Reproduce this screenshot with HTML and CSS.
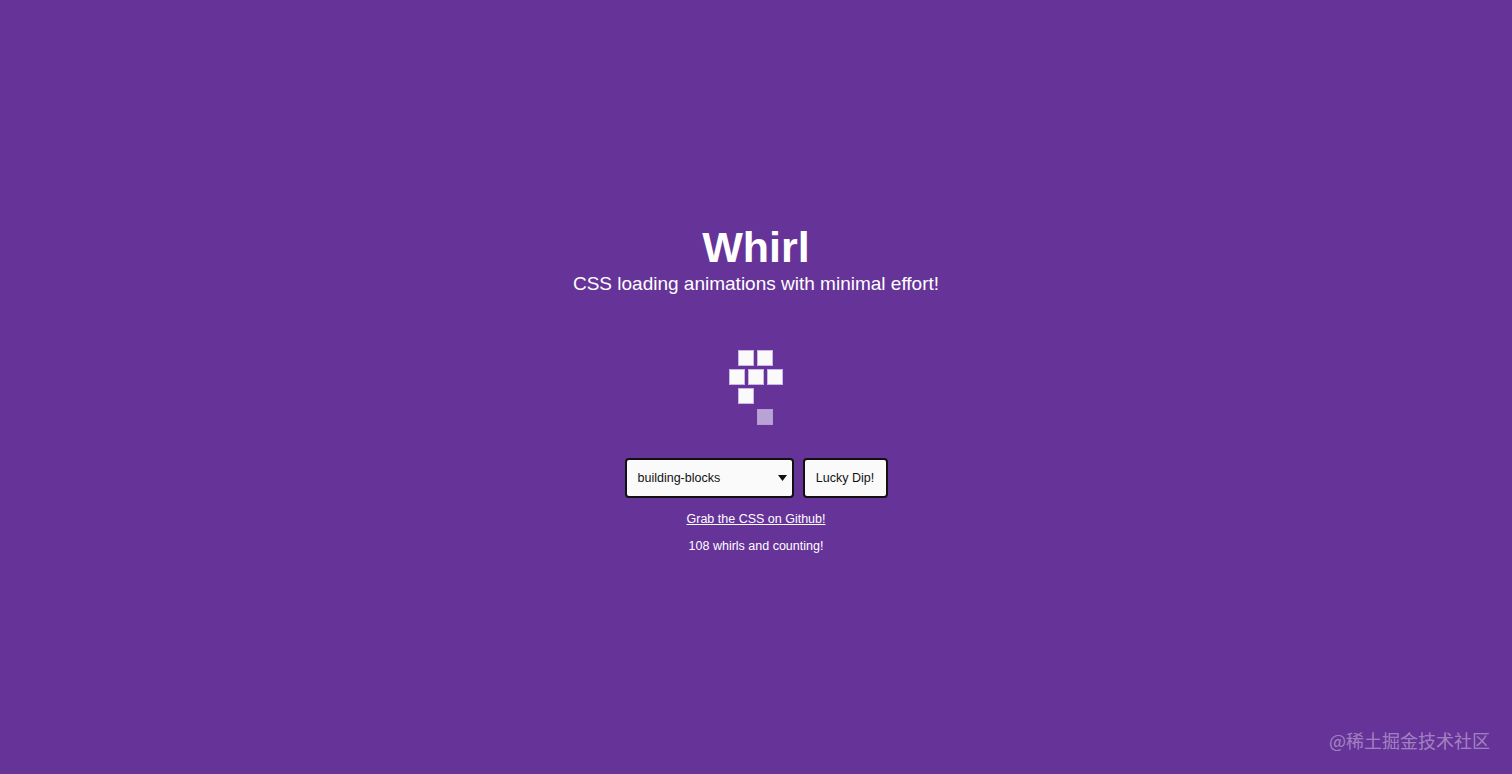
FILE: index.html
```html
<!DOCTYPE html>
<html lang="en">
<head>
    <meta charset="UTF-8">
    <meta name="viewport" content="width=device-width, initial-scale=1.0">
    <title>Whirl</title>
    <link rel="stylesheet" href="styles.css">
</head>
<body>

    <main class="page">
        <header class="intro">
            <h1 class="title">Whirl</h1>
            <p class="tagline">CSS loading animations with minimal effort!</p>
        </header>

        <!-- current whirl: building-blocks -->
        <div class="whirl">
            <span class="block b1"></span>
            <span class="block b2"></span>
            <span class="block b3"></span>
            <span class="block b4"></span>
            <span class="block b5"></span>
            <span class="block b6"></span>
            <span class="block b7 fading"></span>
        </div>

        <div class="controls">
            <div class="picker">
                <span class="picker-value">building-blocks</span>
                <svg class="picker-arrow" width="9" height="6" viewBox="0 0 9 6"><path d="M0 0H9L4.5 6Z" fill="#111"/></svg>
            </div>
            <button class="lucky" type="button">Lucky Dip!</button>
        </div>

        <a class="github" href="#">Grab the CSS on Github!</a>
        <p class="count">108 whirls and counting!</p>
    </main>

    <div class="watermark">@稀土掘金技术社区</div>

</body>
</html>
```

FILE: styles.css
```css
/* styles.css */

body {
    margin: 0;
    height: 774px;
    background-color: #663399;
    color: #fff;
    font-family: "Liberation Sans", Arial, sans-serif;
    overflow: hidden;
}

.page {
    display: flex;
    flex-direction: column;
    align-items: center;
    padding-top: 224px;
}

.title {
    margin: 0;
    font-size: 43px;
    line-height: 46px;
    font-weight: bold;
}

.tagline {
    margin: 2px 0 0;
    font-size: 19px;
    line-height: 23px;
}

.intro {
    text-align: center;
}

/* building-blocks frame */
.whirl {
    position: relative;
    width: 54px;
    height: 75px;
    margin-top: 55px;
    margin-left: -1px;
}

.block {
    position: absolute;
    width: 14px;
    height: 14px;
    background-color: #fafafa;
    border: 1px solid #c9b6e6;
}

.b1 { left: 9px;  top: 0; }
.b2 { left: 28px; top: 0; }
.b3 { left: 0;    top: 19px; }
.b4 { left: 19px; top: 19px; }
.b5 { left: 38px; top: 19px; }
.b6 { left: 9px;  top: 38px; }
.b7 { left: 28px; top: 59px; }

.fading {
    background-color: #b9a3d6;
    border-color: #b39cd2;
}

.controls {
    display: flex;
    gap: 9px;
    margin-top: 33px;
}

.picker {
    box-sizing: border-box;
    width: 169px;
    height: 40px;
    display: flex;
    align-items: center;
    justify-content: space-between;
    padding: 0 6px 0 11px;
    background-color: #fafafa;
    border: 2px solid #111;
    border-radius: 4px;
    color: #111;
    font-size: 12.5px;
}

.picker-arrow {
    margin-right: -1px;
}

.lucky {
    box-sizing: border-box;
    width: 85px;
    height: 40px;
    padding: 0;
    background-color: #fafafa;
    border: 2px solid #111;
    border-radius: 4px;
    color: #111;
    font-family: "Liberation Sans", Arial, sans-serif;
    font-size: 12.5px;
    cursor: pointer;
}

.github {
    margin-top: 13px;
    color: #fff;
    font-size: 12.5px;
    line-height: 16px;
}

.count {
    margin: 11px 0 0;
    font-size: 12.5px;
    line-height: 16px;
}

.watermark {
    position: absolute;
    right: 22px;
    bottom: 21px;
    color: rgba(255, 255, 255, 0.4);
    font-family: "Noto Sans CJK SC", sans-serif;
    font-size: 18px;
}
```
